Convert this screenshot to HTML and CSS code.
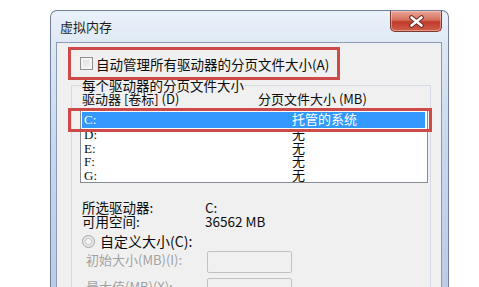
FILE: index.html
```html
<!DOCTYPE html>
<html lang="zh-CN">
<head>
    <meta charset="UTF-8">
    <title>虚拟内存</title>
    <link rel="stylesheet" href="styles.css">
</head>
<body>
    <div class="window">
        <div class="titlebar">
            <span class="title">虚拟内存</span>
            <button class="close-btn">
                <svg width="17" height="13" viewBox="0 0 17 13">
                    <path d="M3.5 2.5 L13.5 10.5 M13.5 2.5 L3.5 10.5" stroke="#6b2a22" stroke-width="4.6" stroke-linecap="round"/>
                    <path d="M3.5 2.5 L13.5 10.5 M13.5 2.5 L3.5 10.5" stroke="#ffffff" stroke-width="2.6" stroke-linecap="round"/>
                </svg>
            </button>
        </div>
        <div class="client">
            <div class="auto-row">
                <span class="checkbox"></span>
                <span>自动管理所有驱动器的分页文件大小(A)</span>
            </div>
            <fieldset class="group">
                <legend>每个驱动器的分页文件大小</legend>
                <div class="list-head">
                    <span>驱动器 [卷标] (D)</span>
                    <span>分页文件大小 (MB)</span>
                </div>
                <div class="listbox">
                    <div class="row selected"><span>C:</span><span>托管的系统</span></div>
                    <div class="row"><span>D:</span><span>无</span></div>
                    <div class="row"><span>E:</span><span>无</span></div>
                    <div class="row"><span>F:</span><span>无</span></div>
                    <div class="row"><span>G:</span><span>无</span></div>
                </div>
                <div class="info">
                    <span>所选驱动器:</span><span>C:</span>
                    <span>可用空间:</span><span>36562 MB</span>
                </div>
                <div class="radio-row">
                    <span class="radio"></span>
                    <span>自定义大小(C):</span>
                </div>
                <div class="field-row">
                    <span class="field-label">初始大小(MB)(I):</span>
                    <span class="textbox"></span>
                </div>
                <div class="field-row next">
                    <span class="field-label">最大值(MB)(X):</span>
                    <span class="textbox"></span>
                </div>
            </fieldset>
        </div>
    </div>
</body>
</html>
```

FILE: styles.css
```css
body {
    margin: 0;
    background: #ffffff;
    width: 479px;
    height: 287px;
    overflow: hidden;
    font-family: "Noto Sans CJK SC", sans-serif;
    color: #0c0c0c;
}
.window {
    margin: 10px 0 0 50px;
    width: 399px;
    height: 277px;
    overflow: hidden;
    box-sizing: border-box;
    padding: 0 6px 0 5px;
    border: 1px solid #6f7f9c;
    border-bottom: none;
    border-radius: 7px 7px 0 0;
    background: linear-gradient(to bottom, #eaf1f9 0, #dce7f4 40px, #c8d7ec 140px, #bccce6 100%);
}
.titlebar {
    height: 31px;
    display: flex;
    align-items: flex-start;
}
.title {
    margin: 9px 0 0 4px;
    font-size: 13px;
    line-height: 14px;
    color: #1e1e1e;
}
.close-btn {
    margin-left: auto;
    width: 52px;
    height: 21px;
    padding: 0;
    border: 1px solid #7b3a30;
    border-top: none;
    border-radius: 0 0 5px 5px;
    background: linear-gradient(to bottom, #e9a898 0, #d66f5c 45%, #c0392a 55%, #d0604a 100%);
    box-shadow: inset 0 0 0 1px rgba(255, 220, 210, 0.45);
    display: flex;
    align-items: center;
    justify-content: center;
}
.client {
    height: 250px;
    overflow: hidden;
    background: #f0f0f0;
    border: 1px solid #8c9bb5;
    border-bottom: none;
}
.auto-row {
    position: relative;
    z-index: 1;
    margin: 4px 0 0 11px;
    width: 272px;
    height: 33px;
    box-sizing: border-box;
    border: 3px solid #cd4a48;
    padding-left: 9px;
    display: flex;
    align-items: center;
    gap: 3px;
    font-size: 13.5px;
    line-height: 14px;
}
.checkbox {
    width: 13px;
    height: 13px;
    box-sizing: border-box;
    border: 1px solid #8e8f8f;
    background: linear-gradient(135deg, #dcdcdc, #f6f6f6);
    box-shadow: inset 0 0 0 2px #f4f4f4;
}
.group {
    position: relative;
    margin: -2px 10px 0 14px;
    padding: 0 0 0 10px;
    border: 1px solid #d5dce3;
    border-bottom: none;
    font-size: 13px;
    line-height: 14px;
}
.group legend {
    padding: 0;
    font-size: 13.5px;
    line-height: 14px;
}
.list-head {
    display: grid;
    grid-template-columns: 176px 1fr;
}
.listbox {
    position: relative;
    margin: 2px 0 0 -2px;
    width: 348px;
    box-sizing: border-box;
    border: 1px solid #898c95;
    background: #ffffff;
    padding: 3px 2px 0 1px;
    font-family: "Liberation Serif", "Noto Sans CJK SC", serif;
    font-size: 13px;
}
.row {
    display: grid;
    grid-template-columns: 208px 1fr;
    height: 13.5px;
    line-height: 13.5px;
    padding-left: 2px;
}
.row.selected {
    position: relative;
    height: 16px;
    line-height: 16px;
    background: #3399ff;
    color: #ffffff;
}
.row.selected::after {
    content: "";
    position: absolute;
    top: -4px;
    bottom: -4px;
    left: -14px;
    right: -7px;
    border: 3px solid #cd4a48;
}
.info {
    margin-top: 17px;
    display: grid;
    grid-template-columns: 123px 1fr;
    font-size: 13.5px;
    line-height: 14px;
}
.radio-row {
    margin-top: 5px;
    display: flex;
    align-items: center;
    gap: 5px;
    height: 16px;
    font-size: 14px;
}
.radio {
    width: 13px;
    height: 13px;
    box-sizing: border-box;
    border-radius: 50%;
    border: 1px solid #a3a3a3;
    background: radial-gradient(circle, #f4f4f4 0 2px, #d0d0d0 3px, #ececec 5px);
}
.field-row {
    margin-top: 2px;
    display: flex;
    align-items: center;
    height: 22px;
    padding-left: 4px;
}
.field-row.next {
    margin-top: 5px;
}
.field-label {
    width: 121px;
    padding-bottom: 4px;
    color: #a2a2a2;
}
.textbox {
    width: 85px;
    height: 22px;
    box-sizing: border-box;
    border: 1px solid #c2c2c2;
    border-radius: 2px;
    background: #f0f0f0;
}
```
